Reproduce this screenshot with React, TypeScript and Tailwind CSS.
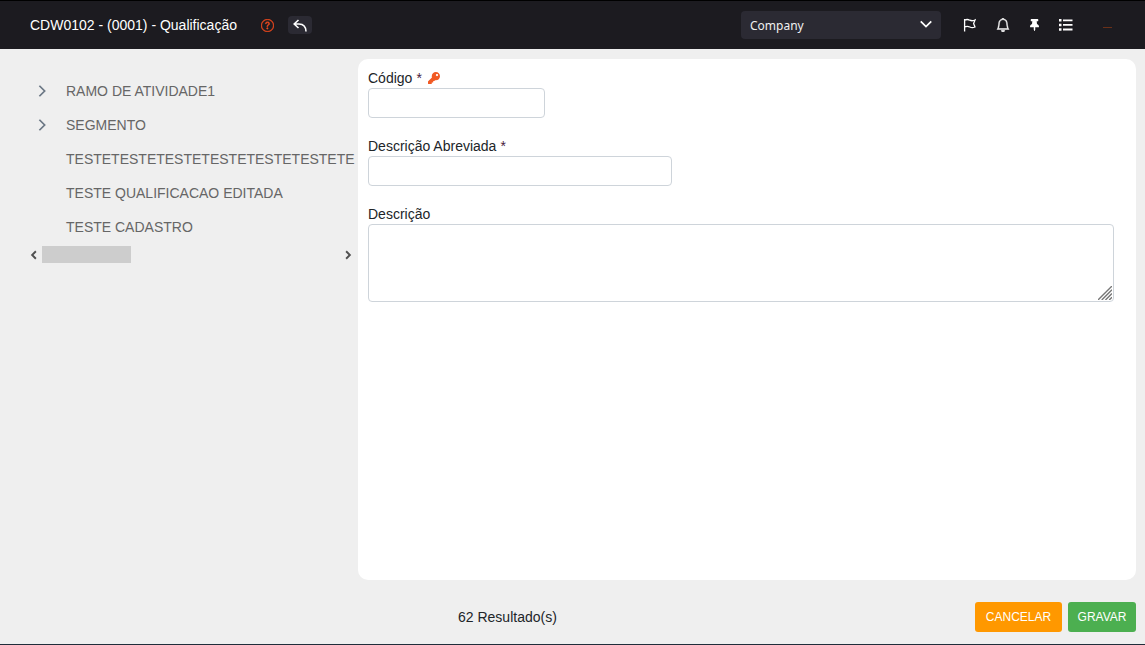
import { BsBell, BsQuestionCircle } from "react-icons/bs";
import { FaKey, FaThumbtack } from "react-icons/fa";

interface TreeItem {
  label: string;
  expandable: boolean;
}

const items: TreeItem[] = [
  { label: "RAMO DE ATIVIDADE1", expandable: true },
  { label: "SEGMENTO", expandable: true },
  { label: "TESTETESTETESTETESTETESTETESTETE", expandable: false },
  { label: "TESTE QUALIFICACAO EDITADA", expandable: false },
  { label: "TESTE CADASTRO", expandable: false },
];

function Chevron({ direction, className }: { direction: "left" | "right" | "down"; className: string }) {
  const paths = {
    left: "M11 2 L5 8 L11 14",
    right: "M5 2 L11 8 L5 14",
    down: "M2 5 L8 11 L14 5",
  };

  return (
    <svg viewBox="0 0 16 16" fill="none" stroke="currentColor" className={className} aria-hidden="true">
      <path d={paths[direction]} />
    </svg>
  );
}

function Header() {
  return (
    <header className="flex h-[49px] shrink-0 items-center justify-between border-t border-black bg-[#1c1b20] pl-[30px] pr-[33px] text-white">
      <div className="flex items-center">
        <h1 className="text-[14px] leading-5">CDW0102 - (0001) - Qualificação</h1>
        <button type="button" aria-label="Ajuda" className="ml-6 text-[#e8491d]">
          <BsQuestionCircle className="size-[13px] stroke-[0.5px]" />
        </button>
        <button type="button" aria-label="Voltar" className="ml-3.5 flex h-[18px] w-6 items-center justify-center rounded bg-[#2b2a33]">
          <svg viewBox="0 0 14 13" fill="none" stroke="currentColor" strokeWidth="1.6" className="h-[13px] w-3.5">
            <path d="M5.5 1 L1.2 5 L5.5 9 M1.2 5 H6 Q12.8 5.2 13 12.5" />
          </svg>
        </button>
      </div>

      <div className="flex items-center">
        <div className="relative">
          <select
            aria-label="Empresa"
            className="block h-7 w-[200px] appearance-none rounded bg-[#2b2a33] pl-[9px] pr-8 pt-0.5 font-['Noto_Sans',sans-serif] text-[12px] text-[#f0f0f0]"
          >
            <option>Company</option>
          </select>
          <Chevron direction="down" className="pointer-events-none absolute right-2 top-1.5 size-3.5 stroke-2" />
        </div>
        <div className="ml-[22px] flex items-center gap-5">
          <button type="button" aria-label="Marcadores">
            <svg viewBox="0 0 13 14" fill="none" stroke="currentColor" strokeWidth="1.3" className="h-3.5 w-[13px]">
              <path d="M1.6 1 V13.5 M1.6 2.2 Q4.2 0.8 6.8 2.2 Q9.2 3.4 12 2 L10.6 5.4 L12 9 Q9.2 10.2 6.8 9 Q4.2 7.8 1.6 9" />
            </svg>
          </button>
          <button type="button" aria-label="Notificações">
            <BsBell className="size-3.5 stroke-[0.5px]" />
          </button>
          <button type="button" aria-label="Fixar">
            <FaThumbtack className="h-3 w-[9px]" />
          </button>
          <button type="button" aria-label="Menu">
            <svg viewBox="0 0 14 12" fill="currentColor" className="h-3 w-3.5">
              <path d="M0 0h2.5v2.5H0z M4 .5h9.5v1.8H4z M0 4.7h2.5v2.5H0z M4 5h9.5v1.8H4z M0 9.3h2.5v2.5H0z M4 9.6h9.5v1.8H4z" />
            </svg>
          </button>
        </div>
        <span className="ml-[30px] mt-1 h-px w-[9px] bg-[#6a3018]" />
      </div>
    </header>
  );
}

function Sidebar() {
  return (
    <aside className="w-[358px] shrink-0 pl-[25px] pt-[15px]">
      <ul>
        {items.map((item) => (
          <li key={item.label} className="flex h-[34px] items-center whitespace-nowrap text-[14px] text-[#666666]">
            <span className="flex w-[41px] shrink-0 pl-2.5">
              {item.expandable && (
                <button type="button" aria-label={`Expandir ${item.label}`}>
                  <Chevron direction="right" className="size-3.5 stroke-2 text-[#6b7785]" />
                </button>
              )}
            </span>
            {item.label}
          </li>
        ))}
      </ul>
      <div className="mr-0.5 mt-0.5 flex h-[17px] items-center text-[#505050]">
        <button type="button" aria-label="Rolar para a esquerda" className="flex w-[17px] justify-center">
          <Chevron direction="left" className="size-2.5 stroke-3" />
        </button>
        <div className="h-full flex-1">
          <div className="h-full w-[89px] bg-[#cdcdcd]" />
        </div>
        <button type="button" aria-label="Rolar para a direita" className="flex w-[17px] justify-center">
          <Chevron direction="right" className="size-2.5 stroke-3" />
        </button>
      </div>
    </aside>
  );
}

function Form() {
  return (
    <form id="qualificacao" className="flex flex-1 flex-col gap-[18px] rounded-[10px] bg-white pl-2.5 pr-[22px] pt-[9px] text-[14px] text-[#212529]">
      <div>
        <label htmlFor="codigo" className="flex items-center leading-5">
          Código <span className="ml-1 text-[#4a1c3c]">*</span>
          <FaKey className="ml-1.5 size-3 text-[#f15a24]" />
        </label>
        <input id="codigo" type="text" className="block h-[30px] w-[177px] rounded border border-[#ced4da] px-2" />
      </div>
      <div>
        <label htmlFor="abreviada" className="flex items-center leading-5">
          Descrição Abreviada <span className="ml-1 text-[#4a1c3c]">*</span>
        </label>
        <input id="abreviada" type="text" className="block h-[30px] w-[304px] rounded border border-[#ced4da] px-2" />
      </div>
      <div>
        <label htmlFor="descricao" className="flex items-center leading-5">Descrição</label>
        <div className="relative">
          <textarea id="descricao" className="block h-[78px] w-full resize-none rounded border border-[#ced4da] px-2 py-1" />
          <svg viewBox="0 0 15 15" stroke="#777777" strokeWidth="1.5" className="pointer-events-none absolute bottom-0.5 right-0.5 size-3.5" aria-hidden="true">
            <path d="M0 15 L15 0 M4 15 L15 4 M8 15 L15 8 M12 15 L15 12" />
          </svg>
        </div>
      </div>
    </form>
  );
}

export default function App() {
  return (
    <div className="flex min-h-screen flex-col border-b border-[#1f2d3a] bg-[#efefef] font-['Liberation_Sans',Arial,sans-serif]">
      <Header />
      <main className="flex flex-1 pr-[9px] pt-2.5">
        <Sidebar />
        <Form />
      </main>
      <footer className="flex h-16 items-center justify-between pl-[458px] pr-[9px] pt-2.5">
        <p className="text-[14px] text-[#212529]">62 Resultado(s)</p>
        <div className="flex gap-1.5 text-[12px] text-white">
          <button type="button" className="h-[30px] w-[87px] rounded-[3px] bg-[#ff9800]">CANCELAR</button>
          <button type="submit" form="qualificacao" className="h-[30px] w-[68px] rounded-[3px] bg-[#4caf50]">GRAVAR</button>
        </div>
      </footer>
    </div>
  );
}
